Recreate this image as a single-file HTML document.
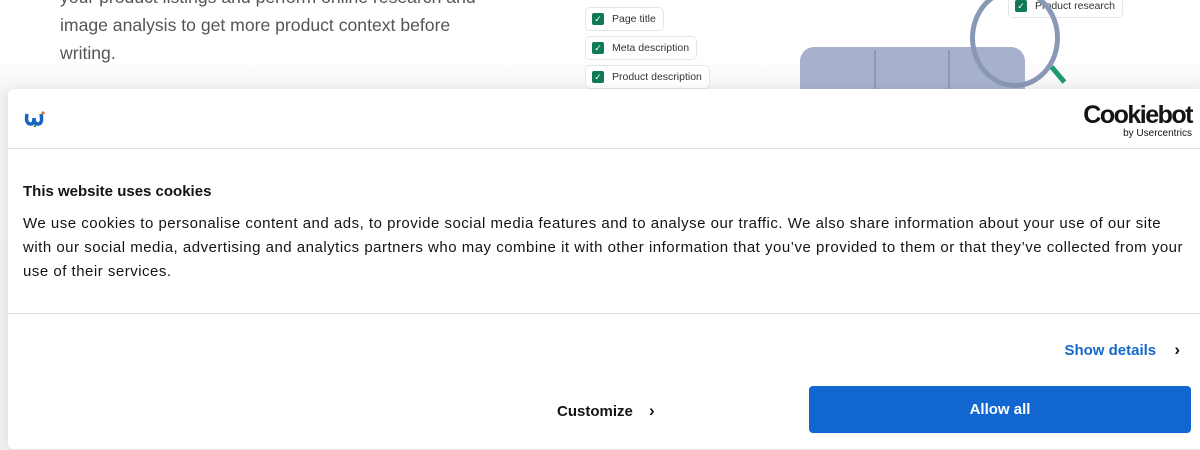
<!DOCTYPE html>
<html><head><meta charset="utf-8"><style>
*{margin:0;padding:0;box-sizing:border-box}
body{width:1200px;height:450px;overflow:hidden;position:relative;font-family:"Liberation Sans",sans-serif;background:linear-gradient(#fff 0,#fff 60px,#f1f1f1 100px,#efefef 450px)}
.ptext{position:absolute;left:60px;top:-17px;font-size:17.6px;line-height:28px;color:#555;width:460px}
.chip{position:absolute;height:24px;border:1px solid #e6e6e6;border-radius:5px;background:#fff;font-size:10.5px;color:#333;padding:0 7px 0 26px;line-height:22px}
.chip:before{content:"✓";position:absolute;left:6px;top:5px;width:12px;height:12px;background:#0f7a55;color:#fff;font-size:9px;line-height:12px;text-align:center;border-radius:2px}
.dlg{position:absolute;left:8px;top:89px;width:1192px;height:360px;background:#fff;border-radius:6px 0 0 6px;box-shadow:0 0 12px rgba(0,0,0,.08)}
.hr{position:absolute;left:0;right:0;height:1px;background:#e1e1e1}
</style></head><body>
<div class="ptext">your product listings and perform online research and<br>image analysis to get more product context before<br>writing.</div>
<div class="chip" style="left:585px;top:7px">Page title</div>
<div class="chip" style="left:585px;top:36px">Meta description</div>
<div class="chip" style="left:585px;top:65px">Product description</div>
<div class="chip" style="left:1008px;top:-6px">Product research</div>
<div style="position:absolute;left:800px;top:47px;width:225px;height:60px;background:#a7b1cc;border-radius:14px 14px 0 0"></div>
<div style="position:absolute;left:874px;top:50px;width:2px;height:40px;background:#8e98b5"></div>
<div style="position:absolute;left:948px;top:50px;width:2px;height:40px;background:#8e98b5"></div>
<div style="position:absolute;left:970px;top:-12px;width:90px;height:100px;border:5px solid #8a98b8;border-radius:50%"></div>
<div style="position:absolute;left:1048px;top:72px;width:20px;height:5px;background:#1f9a6c;transform:rotate(50deg)"></div>
<div class="dlg">
<svg style="position:absolute;left:16px;top:21px" width="22" height="18" viewBox="0 0 22 18"><path d="M3 4 Q1 14 7 14 Q10 14 10 8 Q10 14 14 14 Q19 14 17 4" fill="none" stroke="#1565c0" stroke-width="3.5"/><circle cx="19" cy="3" r="1.6" fill="#e07020"/><circle cx="11" cy="16" r="1.2" fill="#2a9a4a"/></svg>
<div style="position:absolute;right:8px;top:13px;text-align:right;color:#141414"><div style="font-size:25px;font-weight:bold;letter-spacing:-1.5px;line-height:26px">Cookiebot</div><div style="font-size:10px;line-height:11px">by Usercentrics</div></div>
<div class="hr" style="top:59px"></div>
<div style="position:absolute;left:15px;top:94px;font-size:15px;font-weight:bold;color:#141414">This website uses cookies</div>
<div style="position:absolute;left:15px;top:123px;width:1165px;font-size:15px;line-height:24px;color:#141414;letter-spacing:.5px">We use cookies to personalise content and ads, to provide social media features and to analyse our traffic. We also share information about your use of our site with our social media, advertising and analytics partners who may combine it with other information that you’ve provided to them or that they’ve collected from your use of their services.</div>
<div class="hr" style="top:224px"></div>
<div style="position:absolute;right:20px;top:251px;font-size:15px;font-weight:bold;color:#1568c8">Show details <span style="color:#141414;margin-left:14px;font-size:17px">›</span></div>
<div style="position:absolute;left:549px;top:312px;font-size:15px;font-weight:bold;color:#141414">Customize <span style="margin-left:12px;font-size:17px">›</span></div>
<div style="position:absolute;left:801px;top:297px;width:382px;height:47px;background:#1167cf;border-radius:4px;color:#fff;font-size:15px;font-weight:bold;text-align:center;line-height:47px">Allow all</div>
</div>
</body></html>
